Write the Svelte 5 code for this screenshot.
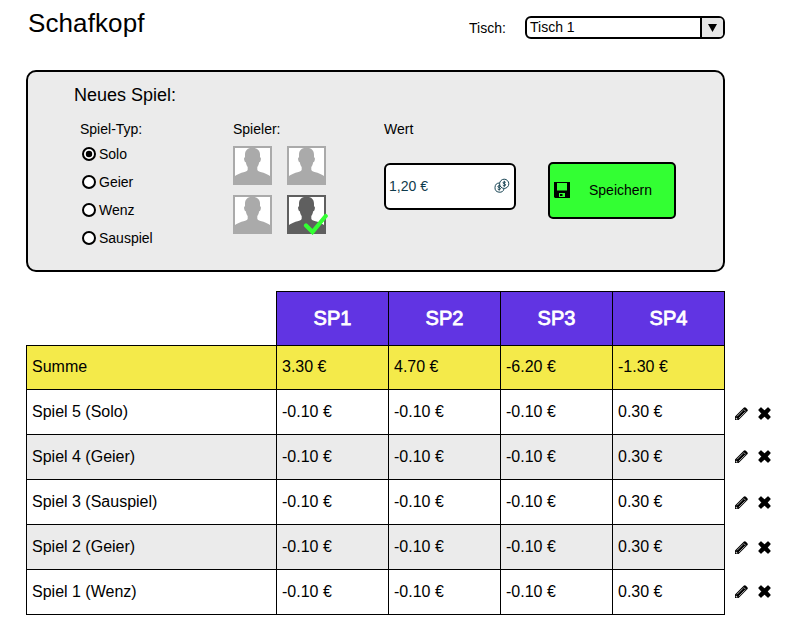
<script>
  const types = ['Solo', 'Geier', 'Wenz', 'Sauspiel'];
  let selectedType = $state('Solo');
  let players = $state([false, false, false, true]);

  const heads = ['SP1', 'SP2', 'SP3', 'SP4'];
  const sums = ['3.30 €', '4.70 €', '-6.20 €', '-1.30 €'];
  const values = ['-0.10 €', '-0.10 €', '-0.10 €', '0.30 €'];
  const games = [
    { name: 'Spiel 5 (Solo)', shift: 17 },
    { name: 'Spiel 4 (Geier)', shift: 15 },
    { name: 'Spiel 3 (Sauspiel)', shift: 16 },
    { name: 'Spiel 2 (Geier)', shift: 16 },
    { name: 'Spiel 1 (Wenz)', shift: 15 }
  ];
</script>

<main>
  <header>
    <h1>Schafkopf</h1>
    <span class="label">Tisch:</span>
    <div class="select">
      <span class="current">Tisch 1</span>
      <span class="arrow"><svg width="9" height="8" viewBox="0 0 9 8"><path d="M0 0h9L4.5 8z" /></svg></span>
    </div>
  </header>

  <section class="panel">
    <h2>Neues Spiel:</h2>
    <div class="fields">
      <div class="types">
        <div class="label">Spiel-Typ:</div>
        {#each types as type}
          <div class="radio" role="radio" tabindex="-1" aria-checked={type === selectedType}>
            <svg width="14" height="14" viewBox="0 0 14 14">
              <circle cx="7" cy="7" r="6" fill="#fff" stroke="#000" stroke-width="2" />
              {#if type === selectedType}<circle cx="7" cy="7" r="3.2" />{/if}
            </svg>
            <span>{type}</span>
          </div>
        {/each}
      </div>

      <div class="players">
        <div class="label">Spieler:</div>
        <div class="avatars">
          {#each players as active}
            <div class="avatar" class:active>
              <svg width="39" height="39" viewBox="0 0 39 39">
                <rect x="1" y="1" width="37" height="37" fill="#fff" stroke="currentColor" stroke-width="2" />
                <path
                  fill="currentColor"
                  d="M19.500 1.800C24.500 1.800 27 4.500 27 8.800V11.200C28.200 11.400 28 13 27.700 14.200C27.400 15.500 27 16.200 26.200 16.200C25.800 18.500 25 20 24.300 21V23.500C24.300 24.800 25.500 25.300 27.500 25.900C31.500 26.900 35.500 28.500 38 30.800V38H1V30.800C3.500 28.500 7.500 26.900 11.500 25.900C13.500 25.300 14.700 24.800 14.700 23.500V21C14 20 13.200 18.500 12.800 16.200C12 16.200 11.600 15.500 11.300 14.200C11 13 10.800 11.400 12 11.200V8.800C12 4.500 14.500 1.800 19.500 1.800Z"
                />
              </svg>
              {#if active}
                <svg class="check" width="26" height="22" viewBox="0 0 26 22">
                  <path d="M3 12.5l6.500 6.500L22.700 3" fill="none" stroke="#33ff33" stroke-width="4.200" stroke-linecap="round" />
                </svg>
              {/if}
            </div>
          {/each}
        </div>
      </div>

      <div class="value">
        <div class="label">Wert</div>
        <div class="input">
          <span>1,20 €</span>
          <svg width="16" height="16" viewBox="0 0 16 16" fill="none" stroke="#184454">
            <circle cx="10.2" cy="5.800" r="4.600" />
            <path d="M5.600 5a4.600 4.600 0 1 0 4.500 5.500" />
            <path d="M11.700 4.400c-.8-.8-2.700-.6-2.700.4 0 1.200 2.700.8 2.700 2.100 0 1-2 1.200-2.900.3M10.300 2.800v6M6.500 8.200c-.8-.8-2.600-.6-2.600.4 0 1.200 2.600.8 2.600 2.100 0 1-1.900 1.200-2.800.3M5.200 6.800v5.800" />
          </svg>
        </div>
      </div>

      <button type="button">
        <svg width="16" height="16" viewBox="0 0 16 16">
          <path fill-rule="evenodd" d="M0 0h16v16H1l-1-1zM3 1v7.500h10V1zM5 11v4h6v-4zM6 12h2.500v2H6z" />
        </svg>
        <span>Speichern</span>
      </button>
    </div>
  </section>

  <div class="results">
    <table>
      <colgroup>
        <col class="wide" /><col /><col /><col /><col />
      </colgroup>
      <tbody>
        <tr class="head">
          <td class="blank"></td>
          {#each heads as head}<th>{head}</th>{/each}
        </tr>
        <tr class="sum">
          <td>Summe</td>
          {#each sums as sum}<td>{sum}</td>{/each}
        </tr>
        {#each games as game, i}
          <tr class:odd={i % 2 === 1}>
            <td>{game.name}</td>
            {#each values as value}<td>{value}</td>{/each}
          </tr>
        {/each}
      </tbody>
    </table>
    <div class="actions">
      {#each games as game}
        <div class="action" style="padding-top: {game.shift}px">
          <svg width="13" height="13" viewBox="0 0 13 13">
            <path d="M0 13V9.500L8.700.8Q9.800-.3 10.900.8L12.300 2.200Q13.300 3.200 12.300 4.300L3.600 13z" />
            <path d="M2 9.300L8 3.300M3.900 11.200L9.900 5.200" stroke="#bbb" stroke-width=".9" />
            <path d="M8.600 2.300l2.300 2.300" stroke="#eee" stroke-width=".7" />
            <path d="M1 10.400l1.800 1.800-1.400.4-.7-.7z" fill="#ddd" />
          </svg>
          <svg width="13" height="13" viewBox="0 0 13 13">
            <path
              d="M3 1L6.500 4.300 10 1 12 3 8.800 6.500 12 10 10 12 6.500 8.700 3 12 1 10 4.200 6.500 1 3z"
              stroke="#000"
              stroke-width="1.300"
              stroke-linejoin="round"
            />
          </svg>
        </div>
      {/each}
    </div>
  </div>
</main>

<style>
  :global(body) {
    background: #fff;
  }
  main {
    box-sizing: border-box;
    width: 787px;
    height: 641px;
    padding: 0 0 0 26px;
    overflow: hidden;
    font-family: 'Liberation Sans', Arial, sans-serif;
    font-size: 14px;
    color: #000;
  }
  svg {
    display: block;
    flex: none;
  }
  h1,
  h2 {
    margin: 0;
    font-weight: 400;
  }
  .label {
    line-height: 16px;
  }
  header {
    display: flex;
    align-items: flex-start;
    width: 699px;
    height: 54px;
    padding-top: 16px;
    box-sizing: border-box;
    margin-bottom: 16px;
  }
  h1 {
    width: 441px;
    padding-left: 2px;
    font-size: 26px;
    letter-spacing: 0.1px;
    line-height: 30px;
    margin-top: -8px;
  }
  header .label {
    margin-top: 4px;
    width: 56px;
  }
  .select {
    box-sizing: border-box;
    display: flex;
    width: 200px;
    height: 23px;
    border: 2px solid #000;
    border-radius: 6px;
    overflow: hidden;
  }
  .current {
    flex: 1;
    padding-left: 3px;
    line-height: 18px;
  }
  .arrow {
    box-sizing: border-box;
    width: 23px;
    border-left: 2px solid #000;
    background: #e6e6e6;
    display: flex;
    padding: 6px 0 0 6px;
  }
  .panel {
    box-sizing: border-box;
    width: 699px;
    height: 202px;
    border: 2px solid #000;
    border-radius: 10px;
    background: #ebebeb;
    padding: 12px 0 0 46px;
  }
  h2 {
    font-size: 18px;
    line-height: 22px;
  }
  .fields {
    display: flex;
    padding: 15px 0 0 6px;
  }
  .types {
    width: 153px;
  }
  .types .label {
    margin-bottom: 3px;
  }
  .radio {
    display: flex;
    align-items: center;
    height: 28px;
    padding-left: 2px;
    gap: 3px;
    line-height: 16px;
  }
  .players {
    width: 151px;
  }
  .avatars {
    display: grid;
    grid-template-columns: 39px 39px;
    gap: 10px 15px;
    margin-top: 9px;
  }
  .avatar {
    position: relative;
    color: #aaa;
  }
  .avatar.active {
    color: #5f5f5f;
  }
  .check {
    position: absolute;
    left: 16px;
    top: 18px;
  }
  .value {
    width: 164px;
  }
  .input {
    box-sizing: border-box;
    display: flex;
    align-items: center;
    justify-content: space-between;
    width: 132px;
    height: 47px;
    margin-top: 26px;
    padding: 0 4px 1px 3px;
    border: 2px solid #000;
    border-radius: 6px;
    background: #fff;
    color: #0f3b4c;
    line-height: 16px;
  }
  button {
    box-sizing: border-box;
    display: flex;
    align-items: center;
    width: 128px;
    height: 57px;
    margin: 41px 0 0;
    padding: 0 0 1px 4px;
    border: 2px solid #000;
    border-radius: 5px;
    background: #33ff33;
    font: inherit;
    line-height: 16px;
    color: #000;
  }
  button span {
    flex: 1;
    padding-left: 19px;
    text-align: left;
  }
  .results {
    display: flex;
    margin-top: 19px;
  }
  table {
    width: 699px;
    border-collapse: collapse;
    table-layout: fixed;
    font-size: 16px;
  }
  col {
    width: 112px;
  }
  col.wide {
    width: 250px;
  }
  tr {
    height: 45px;
  }
  tr.head {
    height: 54px;
  }
  tr.sum {
    height: 44px;
  }
  td,
  th {
    box-sizing: border-box;
    border: 1px solid #000;
    padding: 0 5px 1px;
    line-height: 18px;
    vertical-align: middle;
    text-align: left;
  }
  .blank {
    border-top: none;
    border-left: none;
  }
  th {
    background: #6134e3;
    color: #fff;
    font-size: 20px;
    font-weight: 400;
    text-align: center;
    -webkit-text-stroke: 0.8px #fff;
  }
  .sum td {
    background: #f4ea4a;
  }
  .odd td {
    background: #ebebeb;
  }
  .actions {
    padding: 99px 0 0 10px;
  }
  .action {
    box-sizing: border-box;
    display: flex;
    gap: 10px;
    height: 45px;
  }
</style>
